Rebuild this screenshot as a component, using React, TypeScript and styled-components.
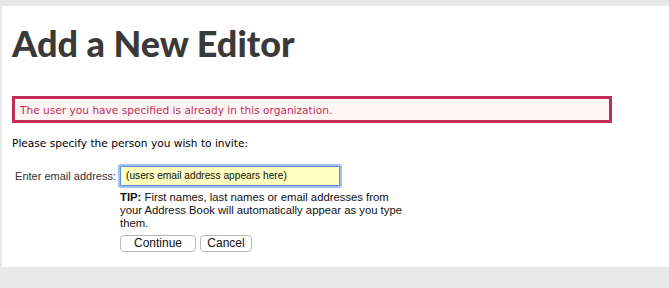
import React from "react";
import styled, { createGlobalStyle } from "styled-components";

const Global = createGlobalStyle`
  html, body { margin: 0; padding: 0; background: #e8e8e8; }
  body { width: 669px; height: 288px; overflow: hidden; }
`;

const Page = styled.div`
  padding: 6px 0 0 2px;
  height: 288px;
  box-sizing: border-box;
`;

const Panel = styled.div`
  background: #ffffff;
  height: 261px;
  padding: 17px 0 0 10px;
  box-sizing: border-box;
`;

const Title = styled.h1`
  margin: 0;
  font-family: "Lato", "Liberation Sans", sans-serif;
  font-weight: 900;
  font-size: 36px;
  line-height: 40px;
  color: #3a3a3a;
`;

const ErrorBox = styled.div`
  margin-top: 33px;
  width: 600px;
  height: 27px;
  box-sizing: border-box;
  border: 3px solid #c42c5a;
  background: #fff5f4;
  padding: 0 0 0 5px;
  display: flex;
  align-items: center;
  font-family: "DejaVu Sans", Verdana, sans-serif;
  font-size: 10.6px;
  color: #c42c5a;
`;

const Intro = styled.p`
  margin: 14px 0 0 0;
  font-family: "DejaVu Sans", Verdana, sans-serif;
  font-size: 10.6px;
  color: #000;
`;

const FormRow = styled.div`
  display: grid;
  grid-template-columns: 108px 290px;
  margin-top: 17px;
  font-family: "Liberation Sans", Arial, sans-serif;
  font-size: 11.3px;
`;

const Label = styled.label`
  color: #333;
  justify-self: end;
  padding-right: 4px;
  line-height: 20px;
  font-size: 11px;
`;

const Input = styled.div`
  box-sizing: border-box;
  width: 220px;
  height: 20px;
  background: #ffffc0;
  border: 1px solid #5d8fd8;
  box-shadow: 0 0 0 2px #9ec3f4;
  border-radius: 1px;
  padding: 0 5px;
  line-height: 18px;
  font-size: 10.2px;
  color: #111;
`;

const Tip = styled.p`
  grid-column: 2;
  width: 282px;
  margin: 5px 0 0 0;
  line-height: 13px;
  color: #111;
`;

const TipLead = styled.strong`
  font-weight: 700;
`;

const Buttons = styled.div`
  grid-column: 2;
  display: flex;
  gap: 4px;
  margin-top: 5px;
`;

const Button = styled.button<{ $w: number }>`
  width: ${(p) => p.$w}px;
  height: 17px;
  padding: 0;
  background: #fff;
  border: 1px solid #b8b8b8;
  border-radius: 4px;
  font-family: "Liberation Sans", Arial, sans-serif;
  font-size: 12px;
  color: #111;
  line-height: 15px;
`;

export default function App() {
  return (
    <>
      <Global />
      <Page>
        <Panel>
          <Title>Add a New Editor</Title>
          <ErrorBox>The user you have specified is already in this organization.</ErrorBox>
          <Intro>Please specify the person you wish to invite:</Intro>
          <FormRow>
            <Label>Enter email address:</Label>
            <Input>(users email address appears here)</Input>
            <Tip>
              <TipLead>TIP:</TipLead>{" "}
              <span>
                First names, last names or email addresses from your Address Book will
                automatically appear as you type them.
              </span>
            </Tip>
            <Buttons>
              <Button $w={76}>Continue</Button>
              <Button $w={52}>Cancel</Button>
            </Buttons>
          </FormRow>
        </Panel>
      </Page>
    </>
  );
}
